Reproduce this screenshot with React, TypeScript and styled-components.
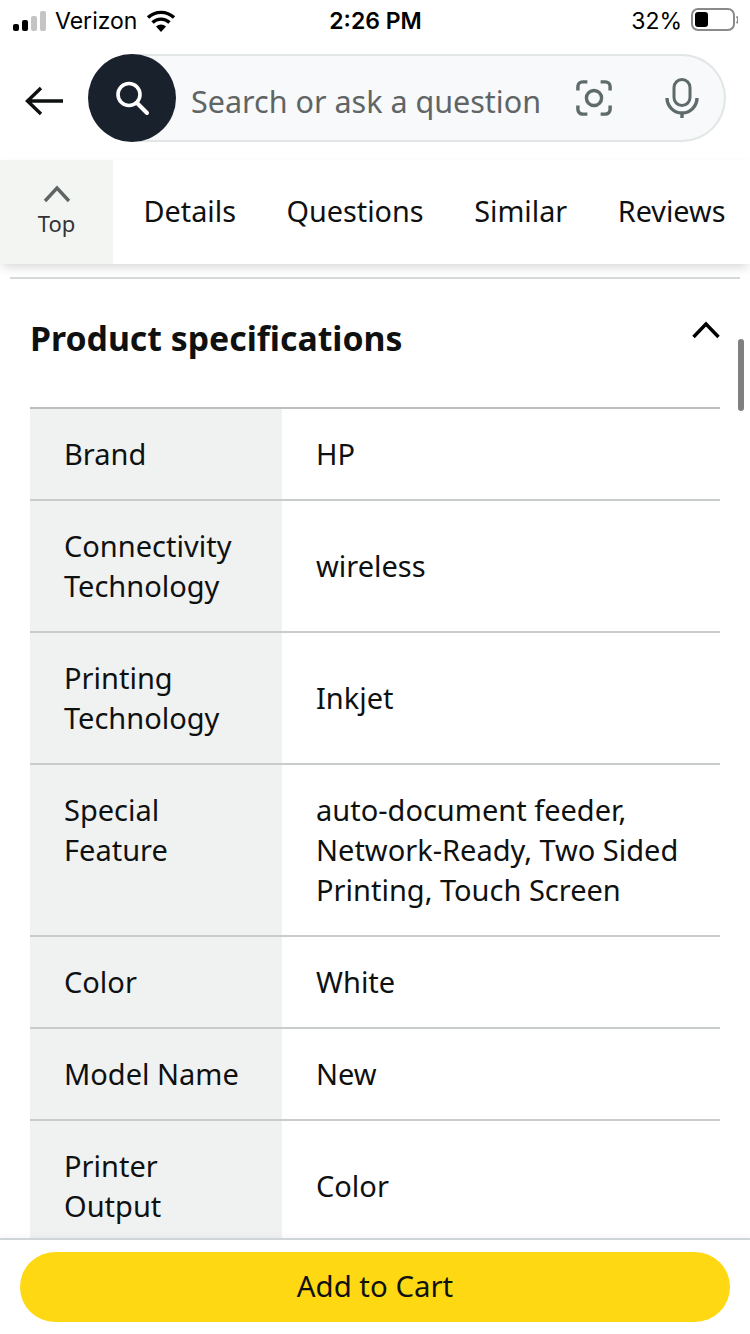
import * as React from "react";
import styled, { createGlobalStyle } from "styled-components";

const GlobalStyle = createGlobalStyle`
  html, body {
    margin: 0;
    padding: 0;
    background: #fff;
  }
  body {
    font-family: "Noto Sans", "Open Sans", sans-serif;
    color: #0f1111;
  }
  * {
    box-sizing: border-box;
  }
`;

const Page = styled.div`
  position: relative;
  width: 750px;
  height: 1334px;
  display: flex;
  flex-direction: column;
  overflow: hidden;
  background: #fff;
`;

const StatusBar = styled.div`
  height: 40px;
  flex: none;
  display: grid;
  grid-template-columns: 1fr auto 1fr;
  align-items: center;
  padding: 2px 12px 0 13px;
  font-family: "Inter", "Liberation Sans", sans-serif;
  font-size: 23px;
  color: #000;
`;

const StatusLeft = styled.div`
  display: flex;
  align-items: center;
  gap: 9px;
`;

const StatusTime = styled.div`
  font-weight: 600;
  font-size: 23px;
`;

const StatusRight = styled.div`
  display: flex;
  align-items: center;
  justify-content: flex-end;
  gap: 9px;
`;

const SearchRow = styled.div`
  flex: none;
  display: flex;
  align-items: center;
  gap: 24px;
  padding: 14px 24px 18px 25px;
`;

const BackArrow = styled.svg`
  flex: none;
  margin-top: 5px;
`;

const SearchBox = styled.div`
  flex: 1;
  height: 88px;
  display: flex;
  align-items: center;
  border: 2px solid #e3e6e6;
  border-left: none;
  border-radius: 44px;
  background: #f7f9fa;
`;

const SearchButton = styled.div`
  width: 88px;
  height: 88px;
  flex: none;
  margin-top: -2px;
  margin-bottom: -2px;
  border-radius: 50%;
  background: #19212c;
  display: flex;
  align-items: center;
  justify-content: center;
`;

const SearchText = styled.div`
  flex: 1;
  margin-left: 15px;
  padding-top: 6px;
  font-size: 30.5px;
  color: #5f6565;
  white-space: nowrap;
`;

const SearchIcons = styled.div`
  display: flex;
  align-items: center;
  gap: 53px;
  padding-right: 25px;
`;

const TabBar = styled.div`
  flex: none;
  height: 104px;
  display: flex;
  align-items: center;
  background: #fff;
  position: relative;
  z-index: 1;
  box-shadow: 0 5px 10px -2px rgba(0, 0, 0, 0.16);
`;

const TopTab = styled.div`
  width: 113px;
  height: 100%;
  flex: none;
  display: flex;
  flex-direction: column;
  align-items: center;
  gap: 5px;
  padding-top: 24px;
  background: #f3f5f3;
  font-size: 22px;
  line-height: 28px;
  color: #333;
`;

const Tabs = styled.div`
  display: flex;
  gap: 50.5px;
  margin-left: 30.5px;
  margin-bottom: 4px;
  font-size: 28.8px;
  color: #0f1111;
  white-space: nowrap;
`;

const Content = styled.div`
  flex: 1;
  min-height: 0;
  overflow: hidden;
  padding: 13px 10px 0 10px;
`;

const Divider = styled.div`
  height: 2px;
  background: #d5d9d9;
`;

const HeadingRow = styled.div`
  display: flex;
  align-items: center;
  justify-content: space-between;
  height: 128px;
  padding: 0 20px 10px 20px;
`;

const Heading = styled.h2`
  margin: 0;
  font-size: 33.8px;
  font-weight: 700;
  color: #0f1111;
`;

const HeadingChevron = styled.svg`
  margin-bottom: 16px;
`;

const SpecTable = styled.div`
  margin: 0 20px;
  border-top: 2px solid #bbbfbf;
`;

const SpecRow = styled.div`
  display: grid;
  grid-template-columns: 252px 1fr;
  border-bottom: 2px solid #c8cccc;
  font-size: 29px;
  line-height: 40px;
`;

const SpecLabel = styled.div`
  background: #f0f2f2;
  padding: 25px 40px 24px 34px;
`;

const SpecValue = styled.div`
  display: flex;
  align-items: center;
  padding: 0 20px 0 34px;
`;

const Scrollbar = styled.div`
  position: absolute;
  top: 339px;
  right: 6px;
  width: 6px;
  height: 72px;
  border-radius: 3px;
  background: #808080;
`;

const BottomBar = styled.div`
  flex: none;
  height: 96px;
  border-top: 2px solid #d0d5d8;
  padding: 12px 20px 0 20px;
  background: #fff;
  position: relative;
  box-shadow: 0 -3px 5px rgba(0, 0, 0, 0.03);
`;

const CartButton = styled.div`
  height: 70px;
  padding-bottom: 2px;
  border-radius: 35px;
  background: #ffd814;
  display: flex;
  align-items: center;
  justify-content: center;
  font-size: 29.4px;
  color: #0f1111;
`;

const specs: { label: string; value: string; height: number }[] = [
  { label: "Brand", value: "HP", height: 92 },
  { label: "Connectivity Technology", value: "wireless", height: 132 },
  { label: "Printing Technology", value: "Inkjet", height: 132 },
  {
    label: "Special Feature",
    value: "auto-document feeder, Network-Ready, Two Sided Printing, Touch Screen",
    height: 172,
  },
  { label: "Color", value: "White", height: 92 },
  { label: "Model Name", value: "New", height: 92 },
  { label: "Printer Output", value: "Color", height: 132 },
];

const App: React.FC = (): React.ReactElement => {
  return (
    <Page>
      <GlobalStyle />
      <StatusBar>
        <StatusLeft>
          <svg width="33" height="20" viewBox="0 0 33 20">
            <rect x="0" y="13" width="6" height="7" rx="2" fill="#000" />
            <rect x="9" y="9" width="6" height="11" rx="2" fill="#000" />
            <rect x="18" y="5" width="6" height="15" rx="2" fill="#c4c4c4" />
            <rect x="27" y="0" width="6" height="20" rx="2" fill="#c4c4c4" />
          </svg>
          <span>Verizon</span>
          <svg width="30" height="22" viewBox="0 0 30 22">
            <path d="M15 22 L10 16.5 A7.5 7.5 0 0 1 20 16.5 Z" fill="#000" />
            <path d="M6.5 12.5 A12.5 12.5 0 0 1 23.5 12.5" fill="none" stroke="#000" strokeWidth="3.4" />
            <path d="M2 7.5 A19 19 0 0 1 28 7.5" fill="none" stroke="#000" strokeWidth="3.4" />
          </svg>
        </StatusLeft>
        <StatusTime>2:26 PM</StatusTime>
        <StatusRight>
          <span>32%</span>
          <svg width="47" height="26" viewBox="0 0 47 26">
            <rect x="1" y="1" width="42" height="21" rx="6" fill="none" stroke="#8a8a8a" strokeWidth="2" />
            <rect x="4" y="4" width="13" height="15" rx="3" fill="#000" />
            <path d="M45.5 8.5 A4 4 0 0 1 45.5 15" fill="none" stroke="#8a8a8a" strokeWidth="2" />
          </svg>
        </StatusRight>
      </StatusBar>
      <SearchRow>
        <BackArrow width="39" height="30" viewBox="0 0 39 30">
          <path d="M38 15 H3 M16 2 L2.5 15 L16 28" fill="none" stroke="#0f1111" strokeWidth="3.4" />
        </BackArrow>
        <SearchBox>
          <SearchButton>
            <svg width="36" height="36" viewBox="0 0 36 36">
              <circle cx="15" cy="14.5" r="11" fill="none" stroke="#fff" strokeWidth="3.6" />
              <path d="M23 23 L33 33" stroke="#fff" strokeWidth="4" strokeLinecap="round" />
            </svg>
          </SearchButton>
          <SearchText>Search or ask a question</SearchText>
          <SearchIcons>
            <svg width="36" height="36" viewBox="0 0 38 38">
              <path
                d="M2 11 V7 A5 5 0 0 1 7 2 H12 M26 2 H31 A5 5 0 0 1 36 7 V11 M36 27 V31 A5 5 0 0 1 31 36 H26 M12 36 H7 A5 5 0 0 1 2 31 V27"
                fill="none"
                stroke="#5f6a6a"
                strokeWidth="3.6"
              />
              <circle cx="19" cy="19" r="8" fill="none" stroke="#5f6a6a" strokeWidth="3.6" />
            </svg>
            <svg width="34" height="40" viewBox="0 0 34 40">
              <rect x="9" y="1.5" width="16" height="26" rx="8" fill="none" stroke="#5f6a6a" strokeWidth="3" />
              <path d="M2 20 A15 15 0 0 0 32 20 M17 35 V40" fill="none" stroke="#5f6a6a" strokeWidth="3.4" />
            </svg>
          </SearchIcons>
        </SearchBox>
      </SearchRow>
      <TabBar>
        <TopTab>
          <svg width="28" height="20" viewBox="0 0 28 20">
            <path d="M2 17 L14 4 L26 17" fill="none" stroke="#5f6565" strokeWidth="3.4" />
          </svg>
          <span>Top</span>
        </TopTab>
        <Tabs>
          <span>Details</span>
          <span>Questions</span>
          <span>Similar</span>
          <span>Reviews</span>
        </Tabs>
      </TabBar>
      <Content>
        <Divider />
        <HeadingRow>
          <Heading>Product specifications</Heading>
          <HeadingChevron width="28" height="18" viewBox="0 0 28 18">
            <path d="M1.5 16 L14 3 L26.5 16" fill="none" stroke="#000" strokeWidth="3.4" />
          </HeadingChevron>
        </HeadingRow>
        <SpecTable>
          {specs.map((spec) => (
            <SpecRow key={spec.label} style={{ height: spec.height }}>
              <SpecLabel>{spec.label}</SpecLabel>
              <SpecValue>{spec.value}</SpecValue>
            </SpecRow>
          ))}
        </SpecTable>
      </Content>
      <Scrollbar />
      <BottomBar>
        <CartButton>Add to Cart</CartButton>
      </BottomBar>
    </Page>
  );
};

export default App;
